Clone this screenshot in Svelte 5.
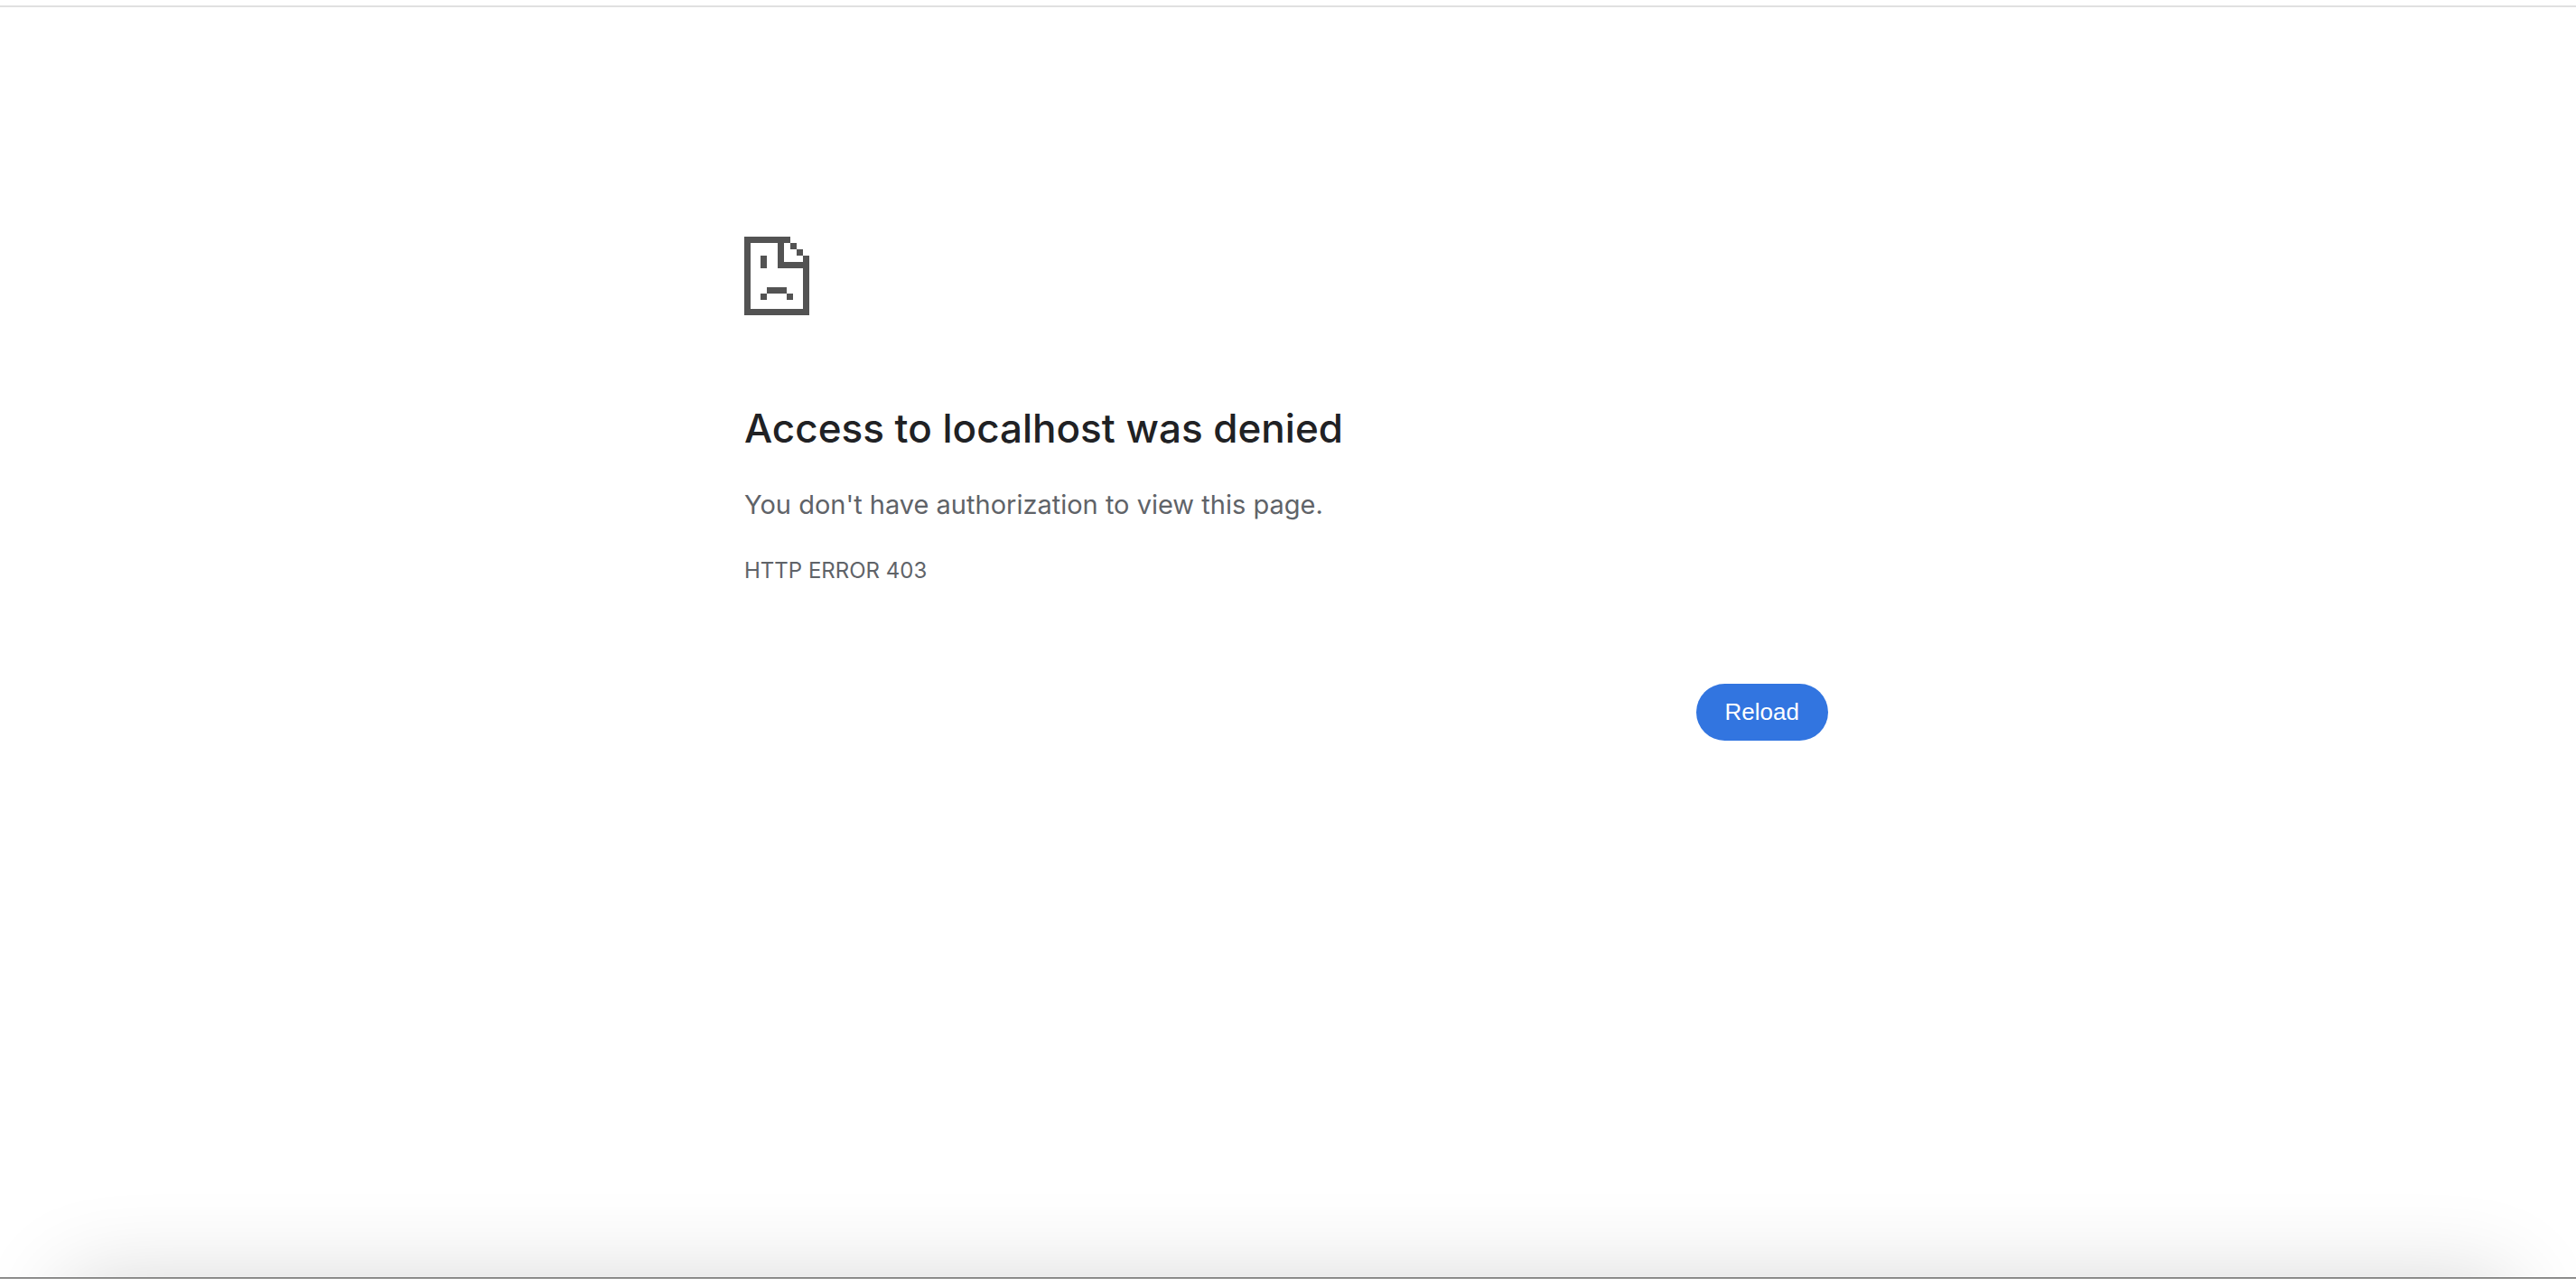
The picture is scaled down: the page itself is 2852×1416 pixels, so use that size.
<script>
  function reload() {
    window.location.reload();
  }
</script>

<div class="page">
  <main class="error">
    <svg class="icon" viewBox="0 0 72 87" shape-rendering="crispEdges" aria-hidden="true">
      <path
        fill="#535353"
        d="M0 0H51V7H44V28H65V21H72V87H0ZM7 7V80H65V35H37V7ZM51 7H58V14H51ZM58 14H65V21H58ZM18 21H25V35H18ZM25 56H47V63H25ZM18 63H25V70H18ZM47 63H54V70H47Z"
        fill-rule="evenodd"
      />
    </svg>
    <h1>Access to localhost was denied</h1>
    <p class="summary">You don't have authorization to view this page.</p>
    <p class="code">HTTP ERROR 403</p>
    <div class="actions">
      <button type="button" onclick={reload}>Reload</button>
    </div>
  </main>
  <div class="edge"></div>
</div>

<style>
  :global(body) {
    margin: 0;
    background: #fff;
  }

  .page {
    position: relative;
    box-sizing: border-box;
    min-height: 100vh;
    padding-top: 6px;
    overflow: hidden;
    font-family: Inter, "Liberation Sans", sans-serif;
    color: #5f6368;
  }

  .page::before {
    content: "";
    display: block;
    height: 2px;
    background: #e0e0e0;
  }

  .error {
    box-sizing: border-box;
    width: 100%;
    max-width: 1204px;
    margin: 0 auto;
    padding: 254px 4px 0 0;
  }

  .icon {
    display: block;
    width: 72px;
    height: 87px;
  }

  h1 {
    margin: 96px 0 32px;
    font-size: 44px;
    font-weight: 500;
    line-height: 58px;
    color: #202124;
  }

  p {
    margin: 0;
  }

  .summary {
    font-size: 29px;
    line-height: 48px;
  }

  .code {
    margin-top: 29px;
    font-size: 24px;
    line-height: 40px;
  }

  .actions {
    display: flex;
    justify-content: flex-end;
    margin-top: 105px;
  }

  button {
    padding: 16px 32px;
    border: 0;
    border-radius: 32px;
    background: #3275e0;
    color: #fff;
    font-family: "Liberation Sans", Arial, sans-serif;
    font-size: 26px;
    line-height: 31px;
    cursor: pointer;
  }

  .edge {
    position: absolute;
    right: 0;
    bottom: 0;
    left: 0;
    height: 2px;
    background: linear-gradient(#7c7c7c 50%, #a0a09e 50%);
  }

  .edge::before {
    content: "";
    position: absolute;
    inset: 2px 72px auto;
    height: 200px;
    box-shadow: 0 0 100px 0 rgb(0 0 0 / 16%);
    z-index: -1;
  }
</style>
